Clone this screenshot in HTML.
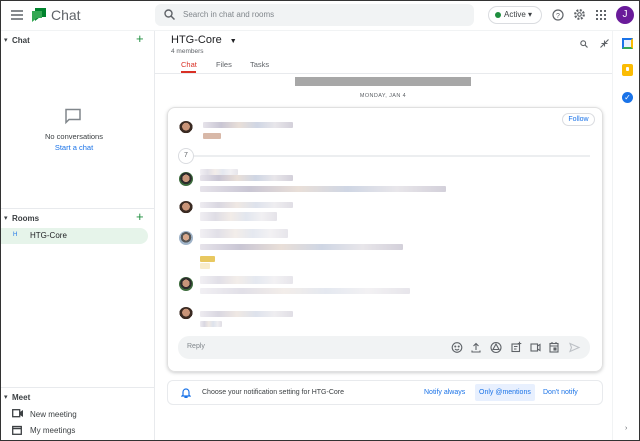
<!DOCTYPE html>
<html><head><meta charset="utf-8"><style>
*{box-sizing:border-box;margin:0;padding:0}
body{width:640px;height:441px;overflow:hidden;font-family:"Liberation Sans",sans-serif;background:#fff;position:relative;color:#3c4043}
#frame{position:absolute;inset:0;border:1px solid #333;pointer-events:none;z-index:9}
.a{position:absolute}
.bar{position:absolute;height:6px;border-radius:1px;background:linear-gradient(90deg,#e6e3ea,#c9c6d4 20%,#e9dfd8 40%,#cfd6e4 60%,#e8e6ea 80%,#d3d0da)}
.bar.l{opacity:.55}
.av{position:absolute;width:14px;height:14px;border-radius:50%;background:radial-gradient(circle at 50% 40%,#c99478 0 35%,#3a2a22 36% 60%,#fff 61%)}
.av.g{background:radial-gradient(circle at 50% 45%,#c7957a 0 35%,#2b2b2b 36% 55%,#3c6b3c 56%)}
.av.b{background:radial-gradient(circle at 50% 45%,#d7a78a 0 30%,#555 31% 50%,#9fb3c8 51%)}
</style></head><body>
<div id="frame"></div>
<!-- header -->
<svg class="a" style="left:11px;top:10px" width="12" height="10"><path d="M0 1h12M0 5h12M0 9h12" stroke="#5f6368" stroke-width="1.4"/></svg>
<svg class="a" style="left:31px;top:7px" width="16" height="15"><path d="M4 1h11v9h-6l-5 4z" fill="#00832d"/><path d="M1 4h10v7h-5l-5 4z" fill="#34a853"/></svg>
<div class="a" style="left:51px;top:7px;font-size:14px;color:#5f6368">Chat</div>
<div class="a" style="left:155px;top:4px;width:319px;height:22px;background:#f1f3f4;border-radius:6px"></div>
<svg class="a" style="left:164px;top:9px" width="11" height="11"><circle cx="4.5" cy="4.5" r="3.5" fill="none" stroke="#5f6368" stroke-width="1.4"/><path d="M7 7l3.5 3.5" stroke="#5f6368" stroke-width="1.5"/></svg>
<div class="a" style="left:183px;top:10px;font-size:8px;color:#80868b">Search in chat and rooms</div>
<div class="a" style="left:488px;top:6px;width:54px;height:18px;border:1px solid #dadce0;border-radius:9px"></div>
<div class="a" style="left:495px;top:12px;width:6px;height:6px;border-radius:50%;background:#1e8e3e"></div>
<div class="a" style="left:504px;top:10px;font-size:8px;color:#3c4043">Active ▾</div>
<svg class="a" style="left:552px;top:9px" width="12" height="12"><circle cx="6" cy="6" r="5" fill="none" stroke="#5f6368" stroke-width="1.2"/><text x="6" y="9" font-size="7" text-anchor="middle" fill="#5f6368" font-family="Liberation Sans">?</text></svg>
<svg class="a" style="left:573px;top:8px" width="13" height="13"><circle cx="6.5" cy="6.5" r="4.3" fill="none" stroke="#5f6368" stroke-width="2.2" stroke-dasharray="2 1.4"/><circle cx="6.5" cy="6.5" r="1.8" fill="none" stroke="#5f6368" stroke-width="1.1"/></svg>
<svg class="a" style="left:596px;top:10px" width="10" height="10" fill="#5f6368"><rect x="0" y="0" width="2" height="2"/><rect x="4" y="0" width="2" height="2"/><rect x="8" y="0" width="2" height="2"/><rect x="0" y="4" width="2" height="2"/><rect x="4" y="4" width="2" height="2"/><rect x="8" y="4" width="2" height="2"/><rect x="0" y="8" width="2" height="2"/><rect x="4" y="8" width="2" height="2"/><rect x="8" y="8" width="2" height="2"/></svg>
<div class="a" style="left:616px;top:6px;width:18px;height:18px;border-radius:50%;background:#6a1b9a;color:#fff;font-size:10px;text-align:center;line-height:18px">J</div>
<!-- sidebar -->
<div class="a" style="left:154px;top:30px;width:1px;height:411px;background:#e8eaed"></div>
<div class="a" style="left:0;top:30px;width:640px;height:1px;background:#f1f3f4"></div>
<div class="a" style="left:4px;top:36px;font-size:7px">▾</div>
<div class="a" style="left:12px;top:36px;font-size:8px;font-weight:bold;color:#3c4043">Chat</div>
<div class="a" style="left:136px;top:31px;font-size:13px;color:#1e8e3e">+</div>
<svg class="a" style="left:64px;top:108px" width="18" height="17"><path d="M2 1.5h14v10H5l-3 3z" fill="none" stroke="#80868b" stroke-width="1.5"/></svg>
<div class="a" style="left:0;top:132px;width:148px;text-align:center;font-size:7.5px;color:#3c4043">No conversations</div>
<div class="a" style="left:0;top:143px;width:148px;text-align:center;font-size:7.5px;color:#1a73e8">Start a chat</div>
<div class="a" style="left:0;top:208px;width:154px;height:1px;background:#e8eaed"></div>
<div class="a" style="left:4px;top:214px;font-size:7px">▾</div>
<div class="a" style="left:12px;top:214px;font-size:8px;font-weight:bold">Rooms</div>
<div class="a" style="left:136px;top:209px;font-size:13px;color:#1e8e3e">+</div>
<div class="a" style="left:0;top:228px;width:148px;height:16px;background:#e6f4ea;border-radius:0 8px 8px 0"></div>
<div class="a" style="left:13px;top:232px;font-size:6px;color:#1a73e8">H</div>
<div class="a" style="left:30px;top:231px;font-size:8px;color:#202124">HTG-Core</div>
<div class="a" style="left:0;top:387px;width:154px;height:1px;background:#e8eaed"></div>
<div class="a" style="left:4px;top:393px;font-size:7px">▾</div>
<div class="a" style="left:12px;top:393px;font-size:8px;font-weight:bold">Meet</div>
<svg class="a" style="left:12px;top:409px" width="11" height="9"><rect x="0.7" y="0.7" width="7" height="7" fill="none" stroke="#3c4043" stroke-width="1.3"/><path d="M8 3l3-2v7l-3-2z" fill="#3c4043"/></svg>
<div class="a" style="left:30px;top:410px;font-size:8px">New meeting</div>
<svg class="a" style="left:12px;top:425px" width="10" height="10"><rect x="0.7" y="1.5" width="8.6" height="7.8" fill="none" stroke="#3c4043" stroke-width="1.3"/><path d="M0.7 3.5h8.6" stroke="#3c4043" stroke-width="1.5"/></svg>
<div class="a" style="left:30px;top:426px;font-size:8px">My meetings</div>
<!-- main header -->
<div class="a" style="left:171px;top:34px;font-size:11px;color:#202124">HTG-Core <span style="font-size:7px;margin-left:5px">▼</span></div>
<div class="a" style="left:171px;top:48px;font-size:6.5px;color:#5f6368">4 members</div>
<div class="a" style="left:181px;top:60px;font-size:7.5px;color:#d93025">Chat</div>
<div class="a" style="left:181px;top:71px;width:15px;height:2px;background:#d93025"></div>
<div class="a" style="left:216px;top:60px;font-size:7.5px;color:#5f6368">Files</div>
<div class="a" style="left:250px;top:60px;font-size:7.5px;color:#5f6368">Tasks</div>
<div class="a" style="left:155px;top:73px;width:457px;height:1px;background:#e8eaed"></div>
<svg class="a" style="left:580px;top:40px" width="8" height="8"><circle cx="3.2" cy="3.2" r="2.4" fill="none" stroke="#5f6368" stroke-width="1.1"/><path d="M5 5l2.5 2.5" stroke="#5f6368" stroke-width="1.2"/></svg>
<svg class="a" style="left:600px;top:39px" width="9" height="9"><path d="M8.5 0.5L5 4M0.5 8.5L4 5M4.5 1.5v3h3M1.5 4.5h3v3" stroke="#5f6368" stroke-width="1.1" fill="none"/></svg>
<!-- right rail -->
<div class="a" style="left:612px;top:30px;width:1px;height:411px;background:#f1f3f4"></div>
<div class="a" style="left:622px;top:38px;width:11px;height:11px;border:2px solid #1a73e8;border-bottom-color:#34a853;border-right-color:#fbbc04;background:#e8f0fe"></div>
<div class="a" style="left:622px;top:64px;width:11px;height:12px;background:#fbbc04;border-radius:2px"></div>
<div class="a" style="left:626px;top:67px;width:3px;height:4px;background:#fff;border-radius:1px"></div>
<div class="a" style="left:622px;top:92px;width:11px;height:11px;border-radius:50%;background:#1a73e8;color:#fff;font-size:8px;line-height:11px;text-align:center">✓</div>
<div class="a" style="left:625px;top:425px;font-size:7px;color:#5f6368">›</div>
<!-- date -->
<div class="a" style="left:295px;top:77px;width:176px;height:9px;background:#a7a7a7"></div>
<div class="a" style="left:295px;top:93px;width:176px;text-align:center;font-size:5.5px;color:#5f6368;letter-spacing:.4px">MONDAY, JAN 4</div>
<!-- card -->
<div class="a" style="left:167px;top:107px;width:436px;height:265px;border:1px solid #e0e0e0;border-radius:8px;box-shadow:0 1px 3px rgba(60,64,67,.25)"></div>
<div class="a" style="left:562px;top:113px;width:33px;height:13px;border:1px solid #dadce0;border-radius:7px;font-size:7px;color:#1a73e8;text-align:center;line-height:11px">Follow</div>
<div class="av" style="left:179px;top:121px"></div>
<div class="bar" style="left:203px;top:122px;width:90px"></div>
<div class="bar" style="left:203px;top:133px;width:18px;background:#d8b8a8"></div>
<div class="a" style="left:178px;top:148px;width:16px;height:16px;border:1px solid #dadce0;border-radius:50%;font-size:7px;text-align:center;line-height:14px;color:#5f6368">7</div>
<div class="a" style="left:194px;top:155px;width:396px;height:2px;background:#eceef0"></div>
<div class="av g" style="left:179px;top:172px"></div>
<div class="bar l" style="left:200px;top:169px;width:38px"></div>
<div class="bar" style="left:200px;top:175px;width:93px"></div>
<div class="bar" style="left:200px;top:186px;width:246px"></div>
<div class="av" style="left:179px;top:201px"></div>
<div class="bar" style="left:200px;top:202px;width:93px;opacity:.7"></div>
<div class="bar" style="left:200px;top:212px;width:77px;height:9px;opacity:.6"></div>
<div class="av b" style="left:179px;top:231px"></div>
<div class="bar l" style="left:200px;top:229px;width:88px;height:9px"></div>
<div class="bar" style="left:200px;top:244px;width:203px"></div>
<div class="bar" style="left:200px;top:256px;width:15px;background:#e8c860"></div>
<div class="bar l" style="left:200px;top:263px;width:10px;background:#f3dca0"></div>
<div class="av g" style="left:179px;top:277px"></div>
<div class="bar l" style="left:200px;top:276px;width:93px;height:8px"></div>
<div class="bar l" style="left:200px;top:288px;width:210px"></div>
<div class="av" style="left:179px;top:307px"></div>
<div class="bar" style="left:200px;top:311px;width:93px;opacity:.7"></div>
<div class="bar" style="left:200px;top:321px;width:22px;opacity:.7"></div>
<!-- reply -->
<div class="a" style="left:178px;top:336px;width:412px;height:23px;background:#f1f3f4;border-radius:11px"></div>
<div class="a" style="left:187px;top:343px;font-size:7px;color:#80868b">Reply</div>
<svg class="a" style="left:450px;top:341px" width="135" height="13" fill="none" stroke="#5f6368" stroke-width="1.1">
<circle cx="7" cy="6.5" r="4.8"/><circle cx="5.3" cy="5.5" r=".5"/><circle cx="8.7" cy="5.5" r=".5"/><path d="M5 8q2 2 4 0"/>
<path d="M22 9.5v1.5h8v-1.5M26 9V2.5M23.5 5L26 2.5L28.5 5"/>
<circle cx="46" cy="6.5" r="5"/><path d="M46 3l3 5.5h-6z"/>
<rect x="62" y="3" width="7.5" height="7.5"/><path d="M64 5.5h3.5M64 8h2.5M69.5 0.8v3.5M67.8 2.5h3.5"/>
<rect x="81" y="3" width="6.5" height="7"/><path d="M87.5 5l2.5-1.5v6L87.5 8"/>
<rect x="100" y="2.5" width="8" height="8.5"/><path d="M100 5h8M102 1v2M106 1v2"/><rect x="104" y="7" width="2" height="2" fill="#5f6368"/>
<path d="M120 2.5l9 4-9 4 1.5-4z" stroke="#bdc1c6"/>
</svg>
<!-- notification -->
<div class="a" style="left:167px;top:380px;width:436px;height:25px;border:1px solid #e8eaed;border-radius:6px"></div>
<svg class="a" style="left:181px;top:387px" width="10" height="11"><path d="M2 8V5a3 3 0 016 0v3l1 1H1z M4 9.5h2v1H4z" fill="none" stroke="#1a73e8" stroke-width="1.2"/></svg>
<div class="a" style="left:202px;top:389px;font-size:7px;color:#3c4043">Choose your notification setting for HTG-Core</div>
<div class="a" style="left:424px;top:389px;font-size:7px;color:#1a73e8">Notify always</div>
<div class="a" style="left:475px;top:384px;width:60px;height:17px;background:#e8f0fe;border-radius:2px"></div>
<div class="a" style="left:479px;top:389px;font-size:7px;color:#1a73e8">Only @mentions</div>
<div class="a" style="left:543px;top:389px;font-size:7px;color:#1a73e8">Don't notify</div>
</body></html>
